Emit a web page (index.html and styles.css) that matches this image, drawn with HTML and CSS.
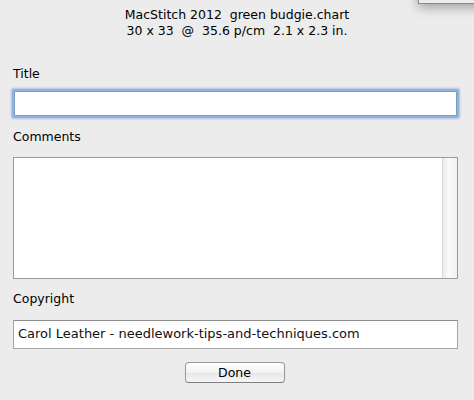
FILE: index.html
```html
<!DOCTYPE html>
<html lang="en">
<head>
<meta charset="UTF-8" />
<title>Chart Info</title>
<link rel="stylesheet" href="styles.css">
</head>
<body>

<div class="behind"></div>

<div class="sheet">
  <!-- chart summary -->
  <div class="summary">
    <div class="line">MacStitch 2012  green budgie.chart</div>
    <div class="line">30 x 33  @  35.6 p/cm  2.1 x 2.3 in.</div>
  </div>

  <form class="info">
    <label class="field">
      <span class="caption">Title</span>
      <input type="text" class="box focused" value="" />
    </label>

    <label class="field">
      <span class="caption">Comments</span>
      <div class="memo">
        <textarea class="memo-text"></textarea>
        <div class="scroller"></div>
      </div>
    </label>

    <label class="field">
      <span class="caption">Copyright</span>
      <input type="text" class="box copy" value="Carol Leather - needlework-tips-and-techniques.com" />
    </label>

    <div class="actions">
      <button type="button" class="done">Done</button>
    </div>
  </form>
</div>

</body>
</html>
```

FILE: styles.css
```css
body {
  margin: 0;
  background: #ececec;
  font-family: "DejaVu Sans", "Liberation Sans", sans-serif;
  font-size: 12.5px;
  color: #000;
  overflow: hidden;
}
.behind {
  position: absolute;
  top: -20px;
  right: -10px;
  width: 64px;
  height: 22px;
  background: #ececec;
  border: 1px solid #8a8a8a;
  box-shadow: 0 3px 12px rgba(0, 0, 0, 0.35);
}
.sheet {
  padding: 0 13px 0 13px;
}
.summary {
  padding-top: 7px;
  text-align: center;
  line-height: 16px;
}
.line {
  white-space: pre;
}
.info {
  display: flex;
  flex-direction: column;
}
.field {
  display: flex;
  flex-direction: column;
}
.caption {
  line-height: 16px;
}
.field:nth-child(1) .caption {
  margin-top: 27px;
}
.field:nth-child(2) .caption {
  margin-top: 13px;
}
.field:nth-child(3) .caption {
  margin-top: 12px;
}
.box {
  box-sizing: border-box;
  width: 445px;
  font: inherit;
  background: #fff;
  border: 1px solid #a5a5a5;
  border-top-color: #8e8e8e;
  outline: none;
  margin: 0;
}
.focused {
  margin-top: 9px;
  margin-left: 1px;
  width: 443px;
  height: 25px;
  border-color: #7b9ec4;
  box-shadow: 0 0 0 2px #8fb3db, 0 0 2px 3px rgba(110, 150, 200, 0.5);
  border-radius: 1px;
}
.memo {
  margin-top: 12px;
  display: flex;
  width: 445px;
  height: 122px;
  box-sizing: border-box;
  border: 1px solid #9a9a9a;
  background: #fff;
}
.memo-text {
  flex: 1;
  border: none;
  resize: none;
  outline: none;
  font: inherit;
  padding: 2px 4px;
}
.scroller {
  width: 14px;
  border-left: 1px solid #dcdcdc;
  background: linear-gradient(to right, #ececec, #fbfbfb 45%, #f1f1f1);
}
.copy {
  margin-top: 13px;
  height: 29px;
  padding: 0 4px 2px 4px;
  font-size: 13px;
  color: #111;
}
.actions {
  display: flex;
  justify-content: center;
  margin-top: 13px;
}
.done {
  width: 100px;
  height: 21px;
  margin-right: 5px;
  font: inherit;
  color: #000;
  background: linear-gradient(#ffffff, #f3f3f3 50%, #e6e6e6 51%, #f6f6f6);
  border: 1px solid #9a9a9a;
  border-bottom-color: #7e7e7e;
  border-radius: 4px;
  box-shadow: 0 1px 1px rgba(0, 0, 0, 0.12);
  padding: 0 0 1px 0;
}
```
